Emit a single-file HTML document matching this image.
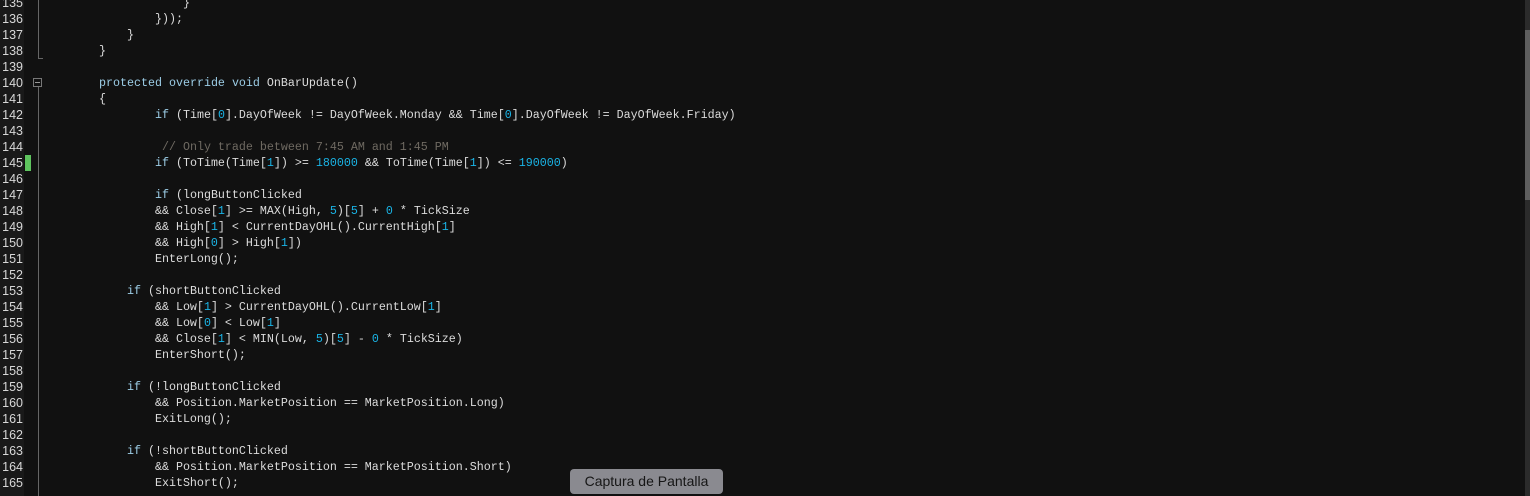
<!DOCTYPE html>
<html><head><style>
html,body{margin:0;width:1530px;height:496px;overflow:hidden}
body{background:#111111;position:relative;font-family:"Liberation Mono",monospace;font-size:11.67px;color:#dcdcdc}
.l{position:absolute;left:0;height:16px;line-height:16px;white-space:pre}
.n{position:absolute;left:0;width:23px;text-align:right;color:#d8d8d8;font-family:"Liberation Sans",sans-serif;font-size:12.5px}
.c{position:absolute;left:99px}
.k{color:#9ccde6}.d{color:#1ab4e6}.m{color:#6f6a62}
</style></head><body>
<div style="position:absolute;left:0;top:0;width:24px;height:496px;background:#191919"></div>
<div style="position:absolute;left:38px;top:0;width:1px;height:58px;background:#666"></div>
<div style="position:absolute;left:38px;top:58px;width:5px;height:1px;background:#666"></div>
<div style="position:absolute;left:33px;top:78px;width:9px;height:9px;border:1px solid #777;box-sizing:border-box"></div>
<div style="position:absolute;left:35px;top:82px;width:5px;height:1px;background:#999"></div>
<div style="position:absolute;left:38px;top:87px;width:1px;height:409px;background:#666"></div>
<div style="position:absolute;left:25px;top:155px;width:6px;height:16px;background:#5ec45e"></div>
<div style="position:absolute;left:1525px;top:0;width:5px;height:496px;background:#2b2b2b"></div>
<div style="position:absolute;left:1525px;top:30px;width:5px;height:170px;background:#5e5e5e"></div>
<div class="l" style="top:-5px"><span class="n">135</span><span class="c">            }</span></div>
<div class="l" style="top:11px"><span class="n">136</span><span class="c">        }));</span></div>
<div class="l" style="top:27px"><span class="n">137</span><span class="c">    }</span></div>
<div class="l" style="top:43px"><span class="n">138</span><span class="c">}</span></div>
<div class="l" style="top:59px"><span class="n">139</span></div>
<div class="l" style="top:75px"><span class="n">140</span><span class="c"><span class="k">protected</span> <span class="k">override</span> <span class="k">void</span> OnBarUpdate()</span></div>
<div class="l" style="top:91px"><span class="n">141</span><span class="c">{</span></div>
<div class="l" style="top:107px"><span class="n">142</span><span class="c">        <span class="k">if</span> (Time[<span class="d">0</span>].DayOfWeek != DayOfWeek.Monday &amp;&amp; Time[<span class="d">0</span>].DayOfWeek != DayOfWeek.Friday)</span></div>
<div class="l" style="top:123px"><span class="n">143</span></div>
<div class="l" style="top:139px"><span class="n">144</span><span class="c">         <span class="m">// Only trade between 7:45 AM and 1:45 PM</span></span></div>
<div class="l" style="top:155px"><span class="n">145</span><span class="c">        <span class="k">if</span> (ToTime(Time[<span class="d">1</span>]) &gt;= <span class="d">180000</span> &amp;&amp; ToTime(Time[<span class="d">1</span>]) &lt;= <span class="d">190000</span>)</span></div>
<div class="l" style="top:171px"><span class="n">146</span></div>
<div class="l" style="top:187px"><span class="n">147</span><span class="c">        <span class="k">if</span> (longButtonClicked</span></div>
<div class="l" style="top:203px"><span class="n">148</span><span class="c">        &amp;&amp; Close[<span class="d">1</span>] &gt;= MAX(High, <span class="d">5</span>)[<span class="d">5</span>] + <span class="d">0</span> * TickSize</span></div>
<div class="l" style="top:219px"><span class="n">149</span><span class="c">        &amp;&amp; High[<span class="d">1</span>] &lt; CurrentDayOHL().CurrentHigh[<span class="d">1</span>]</span></div>
<div class="l" style="top:235px"><span class="n">150</span><span class="c">        &amp;&amp; High[<span class="d">0</span>] &gt; High[<span class="d">1</span>])</span></div>
<div class="l" style="top:251px"><span class="n">151</span><span class="c">        EnterLong();</span></div>
<div class="l" style="top:267px"><span class="n">152</span></div>
<div class="l" style="top:283px"><span class="n">153</span><span class="c">    <span class="k">if</span> (shortButtonClicked</span></div>
<div class="l" style="top:299px"><span class="n">154</span><span class="c">        &amp;&amp; Low[<span class="d">1</span>] &gt; CurrentDayOHL().CurrentLow[<span class="d">1</span>]</span></div>
<div class="l" style="top:315px"><span class="n">155</span><span class="c">        &amp;&amp; Low[<span class="d">0</span>] &lt; Low[<span class="d">1</span>]</span></div>
<div class="l" style="top:331px"><span class="n">156</span><span class="c">        &amp;&amp; Close[<span class="d">1</span>] &lt; MIN(Low, <span class="d">5</span>)[<span class="d">5</span>] - <span class="d">0</span> * TickSize)</span></div>
<div class="l" style="top:347px"><span class="n">157</span><span class="c">        EnterShort();</span></div>
<div class="l" style="top:363px"><span class="n">158</span></div>
<div class="l" style="top:379px"><span class="n">159</span><span class="c">    <span class="k">if</span> (!longButtonClicked</span></div>
<div class="l" style="top:395px"><span class="n">160</span><span class="c">        &amp;&amp; Position.MarketPosition == MarketPosition.Long)</span></div>
<div class="l" style="top:411px"><span class="n">161</span><span class="c">        ExitLong();</span></div>
<div class="l" style="top:427px"><span class="n">162</span></div>
<div class="l" style="top:443px"><span class="n">163</span><span class="c">    <span class="k">if</span> (!shortButtonClicked</span></div>
<div class="l" style="top:459px"><span class="n">164</span><span class="c">        &amp;&amp; Position.MarketPosition == MarketPosition.Short)</span></div>
<div class="l" style="top:475px"><span class="n">165</span><span class="c">        ExitShort();</span></div>
<div style="position:absolute;left:570px;top:469px;width:153px;height:25px;background:#8a8a90;border-radius:4px;color:#161616;font-family:'Liberation Sans',sans-serif;font-size:14px;line-height:25px;text-align:center">Captura de Pantalla</div>
</body></html>
